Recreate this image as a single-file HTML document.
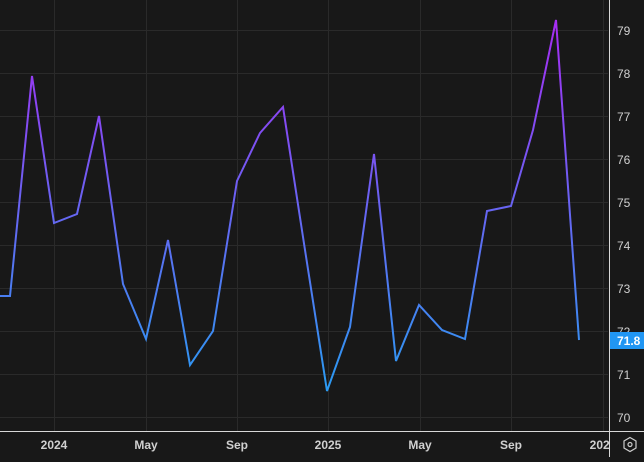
<!DOCTYPE html><html><head><style>
body{margin:0;width:644px;height:457px;background:#181818;overflow:hidden;font-family:"Liberation Sans",sans-serif}
svg text{font-family:"Liberation Sans",sans-serif;font-size:12px;fill:#d0d0d0}
</style></head><body>
<svg width="644" height="457" xmlns="http://www.w3.org/2000/svg">
<defs><linearGradient id="g" x1="0" y1="20" x2="0" y2="391" gradientUnits="userSpaceOnUse">
<stop offset="0" stop-color="#a72cf3"/><stop offset="1" stop-color="#2a9bf2"/></linearGradient>
<clipPath id="c"><rect x="0" y="432" width="609" height="25"/></clipPath></defs>
<g stroke="#2a2a2a" stroke-width="1">
<line x1="0" x2="608" y1="30.5" y2="30.5"/><line x1="0" x2="608" y1="73.5" y2="73.5"/>
<line x1="0" x2="608" y1="116.5" y2="116.5"/><line x1="0" x2="608" y1="159.5" y2="159.5"/>
<line x1="0" x2="608" y1="202.5" y2="202.5"/><line x1="0" x2="608" y1="245.5" y2="245.5"/>
<line x1="0" x2="608" y1="288.5" y2="288.5"/><line x1="0" x2="608" y1="331.5" y2="331.5"/>
<line x1="0" x2="608" y1="374.5" y2="374.5"/><line x1="0" x2="608" y1="417.5" y2="417.5"/>
<line x1="54.5" x2="54.5" y1="0" y2="431"/><line x1="146.5" x2="146.5" y1="0" y2="431"/>
<line x1="237.5" x2="237.5" y1="0" y2="431"/><line x1="328.5" x2="328.5" y1="0" y2="431"/>
<line x1="420.5" x2="420.5" y1="0" y2="431"/><line x1="511.5" x2="511.5" y1="0" y2="431"/>
<line x1="603.5" x2="603.5" y1="0" y2="431"/>
</g>
<polyline fill="none" stroke="url(#g)" stroke-width="2" stroke-linejoin="miter" points="0,296 10,296 32,76 54,223 77,214 99,116 123,284 146,339 168,240 190,365 213,331 237,181 260,133 283,107 305,250 327,391 350,327 374,154 396,361 419,305 442,330 465,339 487,211 511,206 533,130 556,20 579,340"/>
<line x1="609.5" x2="609.5" y1="0" y2="457" stroke="#d8d8d8"/>
<line x1="0" x2="644" y1="431.5" y2="431.5" stroke="#d8d8d8"/>
<g text-anchor="start" style="font-size:12.5px">
<text x="617" y="35">79</text><text x="617" y="78">78</text><text x="617" y="121">77</text>
<text x="617" y="164">76</text><text x="617" y="207">75</text><text x="617" y="250">74</text>
<text x="617" y="293">73</text><text x="617" y="336">72</text><text x="617" y="379">71</text>
<text x="617" y="422">70</text>
</g>
<rect x="610" y="332" width="34" height="17" fill="#2196f3"/>
<text x="617" y="345" style="fill:#fff;font-weight:bold">71.8</text>
<g text-anchor="middle" style="font-weight:bold" clip-path="url(#c)">
<text x="54" y="449">2024</text><text x="146" y="449">May</text>
<text x="237" y="449">Sep</text><text x="328" y="449">2025</text>
<text x="420" y="449">May</text><text x="511" y="449">Sep</text>
<text x="603" y="449">2026</text>
</g>
<polygon points="630,437.5 636,441 636,448 630,451.5 624,448 624,441" fill="none" stroke="#ccc" stroke-width="1.2"/>
<circle cx="630" cy="444.5" r="2" fill="none" stroke="#ccc" stroke-width="1.2"/>
</svg>
</body></html>
